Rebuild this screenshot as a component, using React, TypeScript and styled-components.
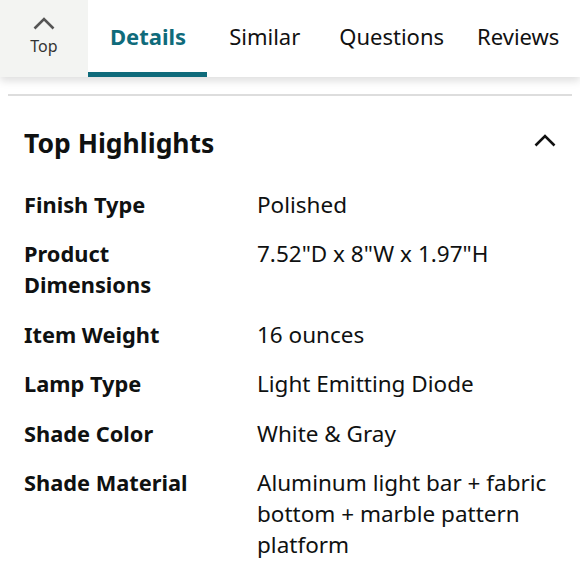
import styled, { createGlobalStyle } from "styled-components";
import { FC } from "react";

const GlobalStyle = createGlobalStyle`
  html, body {
    margin: 0;
    padding: 0;
    background: #fff;
  }
  body {
    font-family: "Noto Sans", "Open Sans", Arial, sans-serif;
    color: #0f1111;
    width: 580px;
    height: 580px;
    overflow: hidden;
  }
`;

const Header = styled.div`
  display: flex;
  align-items: stretch;
  height: 77px;
  background: #fff;
  box-shadow: 0 4px 8px rgba(0, 0, 0, 0.13);
  position: relative;
  z-index: 2;
`;

const TopButton = styled.button`
  width: 88px;
  flex-shrink: 0;
  border: none;
  background: #f3f4f2;
  display: flex;
  flex-direction: column;
  align-items: center;
  justify-content: flex-start;
  gap: 7px;
  padding: 16px 0 0;
  color: #333;
  font-family: inherit;
  font-size: 16px;
  line-height: 18px;
  svg {
    width: 22px;
    height: 14px;
  }
`;

const Tab = styled.div<{ active?: boolean; space: number }>`
  display: flex;
  align-items: center;
  justify-content: center;
  padding: 0 ${(p) => (p.active ? "21px" : "0")} 0 ${(p) => p.space}px;
  font-size: 22px;
  font-weight: ${(p) => (p.active ? 700 : 400)};
  color: ${(p) => (p.active ? "#0f6b7b" : "#111")};
  border-bottom: 5px solid ${(p) => (p.active ? "#0f6b7b" : "transparent")};
  box-sizing: border-box;
  white-space: nowrap;
`;

const Body = styled.div`
  padding: 17px 8px 0;
`;

const Divider = styled.hr`
  border: none;
  height: 2px;
  background: #dddddd;
  margin: 0;
`;

const Section = styled.div`
  padding: 0 16px;
`;

const SectionHead = styled.div`
  display: flex;
  align-items: center;
  justify-content: space-between;
  height: 93px;
  h2 {
    margin: 0;
    font-size: 26.5px;
    font-weight: 700;
  }
  svg {
    width: 22px;
    height: 14px;
    margin-bottom: 6px;
  }
`;

const Rows = styled.div`
  display: flex;
  flex-direction: column;
  gap: 18.4px;
`;

const Row = styled.div`
  display: grid;
  grid-template-columns: 233px 1fr;
  line-height: 31px;
`;

const Label = styled.div`
  font-size: 21.8px;
  font-weight: 700;
`;

const Value = styled.div`
  font-size: 22.5px;
  font-weight: 400;
`;

const Chevron: FC<{ color: string; width: number }> = ({ color, width }) => (
  <svg viewBox="0 0 22 14" fill="none">
    <path d="M1.5 12.5 L11 3 L20.5 12.5" stroke={color} strokeWidth={width} />
  </svg>
);

const tabs: [string, number][] = [
  ["Similar", 22],
  ["Questions", 39],
  ["Reviews", 33],
];

const specs: [string, string][] = [
  ["Finish Type", "Polished"],
  ["Product Dimensions", '7.52"D x 8"W x 1.97"H'],
  ["Item Weight", "16 ounces"],
  ["Lamp Type", "Light Emitting Diode"],
  ["Shade Color", "White & Gray"],
  ["Shade Material", "Aluminum light bar + fabric bottom + marble pattern platform"],
];

const App: FC = () => {
  return (
    <>
      <GlobalStyle />
      <Header>
        <TopButton type="button">
          <Chevron color="#555" width={2.6} />
          Top
        </TopButton>
        <Tab active space={22}>Details</Tab>
        {tabs.map(([name, space]) => (
          <Tab key={name} space={space}>{name}</Tab>
        ))}
      </Header>
      <Body>
        <Divider />
        <Section>
          <SectionHead>
            <h2>Top Highlights</h2>
            <Chevron color="#111" width={2.6} />
          </SectionHead>
          <Rows>
            {specs.map(([label, value]) => (
              <Row key={label}>
                <Label>{label === "Product Dimensions" ? <>Product<br />Dimensions</> : label}</Label>
                <Value>{value}</Value>
              </Row>
            ))}
          </Rows>
        </Section>
      </Body>
    </>
  );
};

export default App;
